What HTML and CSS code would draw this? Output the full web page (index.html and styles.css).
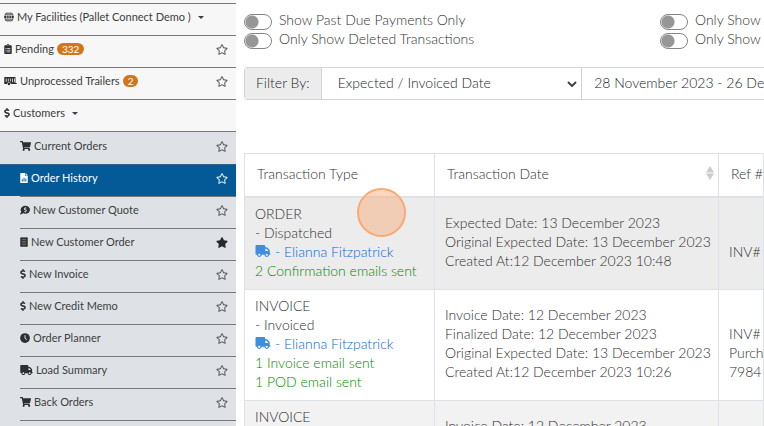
FILE: index.html
```html
<!DOCTYPE html>
<html lang="en">
<head>
<meta charset="utf-8">
<title>Order History</title>
<link rel="stylesheet" href="styles.css">
</head>
<body>
<svg class="sprite" aria-hidden="true">
  <symbol id="globe" viewBox="0 0 16 16"><circle cx="8" cy="8" r="7.8"/><g fill="none" stroke="#f7f7f7" stroke-width="1.1"><ellipse cx="8" cy="8" rx="3.7" ry="8"/><path d="M0 5.2h16M0 10.8h16M8 0v16"/></g></symbol>
  <symbol id="clipboard" viewBox="0 0 12 16"><path fill-rule="evenodd" d="M1.5 2H4a2 2 0 0 1 4 0h2.500a1.500 1.500 0 0 1 1.500 1.500v11a1.500 1.500 0 0 1-1.500 1.500h-9A1.500 1.500 0 0 1 0 14.500v-11A1.500 1.500 0 0 1 1.500 2zM6 1.300a.8.8 0 1 0 0 1.600.8.8 0 0 0 0-1.600zM2.200 6.500v1.300h1.300V6.500zm2.500 0v1h5v-1zM2.200 9.300v1.300h1.300V9.300zm2.500 0v1h5v-1zM2.200 12v1.300h1.300V12zm2.500 0v1h5v-1z"/></symbol>
  <symbol id="trailer" viewBox="0 0 20 16"><path fill-rule="evenodd" d="M1 1.500h16a1 1 0 0 1 1 1V11h2v1.800h-9.500a3 3 0 0 0-6 0H1a1 1 0 0 1-1-1V2.500a1 1 0 0 1 1-1zM2.500 4v5.500h1.200V4zm3.300 0v4.700H7V4zm3.300 0v4.700h1.200V4zm3.300 0v6h1.200V4zm3.200 0v6h1.200V4z"/><circle cx="7.500" cy="12.700" r="2"/></symbol>
  <symbol id="dollar" viewBox="0 0 288 512"><path d="M209.200 233.400l-108-31.600C88.700 198.200 80 186.500 80 173.500c0-16.300 13.200-29.500 29.500-29.500h66.300c12.200 0 24.200 3.700 34.200 10.500 6.100 4.100 14.300 3.100 19.500-2l34.800-34c7.100-6.900 6.100-18.400-1.800-24.500C238 74.800 207.400 64.100 176 64V16c0-8.800-7.200-16-16-16h-32c-8.800 0-16 7.200-16 16v48h-2.500C45.800 64-5.400 118.700.5 183.600c4.200 46.100 39.400 83.600 83.800 96.600l102.500 30c12.500 3.700 21.200 15.300 21.200 28.300 0 16.300-13.200 29.500-29.500 29.500h-66.300C100 368 88 364.300 78 357.500c-6.100-4.100-14.300-3.100-19.500 2l-34.800 34c-7.100 6.900-6.100 18.400 1.800 24.500 24.500 19.200 55.100 29.900 86.500 30v48c0 8.800 7.200 16 16 16h32c8.800 0 16-7.200 16-16v-48.200c46.600-.9 90.300-28.600 105.700-72.700 21.500-61.600-14.600-124.800-72.500-141.700z"/></symbol>
  <symbol id="cart" viewBox="0 0 576 512"><path d="M528.120 301.319l47.273-208C578.806 78.301 567.391 64 551.990 64H159.208l-9.166-44.810C147.758 8.021 137.930 0 126.529 0H24C10.745 0 0 10.745 0 24v16c0 13.255 10.745 24 24 24h69.883l70.248 343.435C147.325 417.100 136 435.222 136 456c0 30.928 25.072 56 56 56s56-25.072 56-56c0-15.674-6.447-29.835-16.824-40h209.647C430.447 426.165 424 440.326 424 456c0 30.928 25.072 56 56 56s56-25.072 56-56c0-22.172-12.888-41.332-31.579-50.405l5.517-24.276c3.413-15.018-8.002-29.319-23.403-29.319H218.117l-6.545-32h293.145c11.206 0 20.920-7.754 23.403-18.681z"/></symbol>
  <symbol id="file-chart" viewBox="0 0 12 16"><path fill-rule="evenodd" d="M1 0h6.500v4.500H12V15a1 1 0 0 1-1 1H1a1 1 0 0 1-1-1V1a1 1 0 0 1 1-1zM2.500 10v3.500H4V10zM5.300 7.500v6h1.500v-6zM8.200 9v4.500h1.500V9zM8.500 0 12 3.500H8.500z"/></symbol>
  <symbol id="quote" viewBox="0 0 16 16"><path fill-rule="evenodd" d="M8.500 1C12.600 1 16 3.900 16 7.500S12.600 14 8.500 14c-1.300 0-2.400-.2-3.500-.7C3.700 14.400 2 15 .4 15c-.5 0-.5-.5-.2-.8.9-1 1.500-2.100 1.700-3.300A6 6 0 0 1 1 7.500C1 3.900 4.400 1 8.500 1zM7.900 3.200v1C5.500 4.600 5.600 7.300 7.500 7.900l1.500.5c.9.300.5 1.200-.5 1.200-.7 0-1-.1-1.500-.5l-.8.9c.5.4 1 .7 1.700.8v1h1.200v-1c2.300-.4 2.300-3.100.4-3.700L8 6.600c-.8-.3-.4-1.200.5-1.200.5 0 .9.100 1.300.4l.8-.9c-.4-.4-.9-.6-1.500-.7v-1z"/></symbol>
  <symbol id="receipt" viewBox="0 0 12 16"><path d="M0 .5 1 1l1-1 1 1 1-1 1 1 1-1 1 1 1-1 1 1 1-1 1 1 1-.5v15l-1-.5-1 1-1-1-1 1-1-1-1 1-1-1-1 1-1-1-1 1-1-1-1 .5z"/><path fill="none" stroke="#8d9195" stroke-width=".9" d="M2.500 4h7M2.500 6.700h7M2.500 9.300h7M2.500 12h7"/></symbol>
  <symbol id="clock" viewBox="0 0 16 16"><circle cx="8" cy="8" r="7.800"/><path fill="none" stroke="#dee2e7" stroke-width="1.600" d="M8 3.500V8.500l3 2"/></symbol>
  <symbol id="truck" viewBox="0 0 640 512"><path fill-rule="evenodd" d="M48 0C21.500 0 0 21.500 0 48V368c0 26.500 21.500 48 48 48H64c0 53 43 96 96 96s96-43 96-96H384c0 53 43 96 96 96s96-43 96-96h32c17.700 0 32-14.300 32-32s-14.300-32-32-32V237.300c0-17-6.700-33.300-18.700-45.300L512 114.700c-12-12-28.300-18.700-45.300-18.700H416V48c0-26.500-21.500-48-48-48H48zM416 160h50.700L544 237.300V256H416V160zM112 416a48 48 0 1 1 96 0 48 48 0 1 1-96 0zm368-48a48 48 0 1 1 0 96 48 48 0 1 1 0-96z"/></symbol>
  <symbol id="star" viewBox="0 0 576 512"><path d="M528.100 171.500L382 150.200 316.700 17.800c-11.700-23.600-45.600-23.900-57.400 0L194 150.200 47.900 171.500c-26.200 3.800-36.700 36.100-17.700 54.600l105.700 103-25 145.500c-4.500 26.300 23.200 46 46.400 33.700L288 439.600l130.700 68.700c23.200 12.200 50.900-7.400 46.400-33.700l-25-145.500 105.700-103c19-18.500 8.500-50.800-17.700-54.600zM388.600 312.300l23.700 138.400L288 385.400l-124.300 65.300 23.700-138.400-100.600-98 139-20.200 62.200-126 62.200 126 139 20.200-100.600 98z"/></symbol>
  <symbol id="star-solid" viewBox="0 0 576 512"><path d="M528.100 171.500L382 150.200 316.700 17.800c-11.700-23.600-45.600-23.900-57.400 0L194 150.200 47.900 171.500c-26.200 3.800-36.700 36.100-17.700 54.600l105.700 103-25 145.500c-4.500 26.300 23.200 46 46.400 33.700L288 439.600l130.700 68.700c23.200 12.200 50.900-7.400 46.400-33.700l-25-145.500 105.700-103c19-18.500 8.500-50.800-17.700-54.600z"/></symbol>
</svg>

<div class="app">
  <nav class="sidebar">
    <ul class="menu">
      <li class="item"><a class="link" href="#"><svg class="icon square"><use href="#globe"/></svg>My Facilities (Pallet Connect Demo )<span class="caret"></span></a></li>
      <li class="item"><a class="link" href="#"><svg class="icon narrow"><use href="#clipboard"/></svg>Pending<span class="badge">332</span></a><button class="fav" aria-label="Favourite Pending"><svg><use href="#star"/></svg></button></li>
      <li class="item"><a class="link" href="#"><svg class="icon wide"><use href="#trailer"/></svg>Unprocessed Trailers<span class="badge">2</span></a><button class="fav" aria-label="Favourite Unprocessed Trailers"><svg><use href="#star"/></svg></button></li>
      <li class="item"><a class="link" href="#"><svg class="icon slim"><use href="#dollar"/></svg>Customers<span class="caret"></span></a></li>
    </ul>
    <ul class="menu submenu">
      <li class="item"><a class="link" href="#"><svg class="icon medium"><use href="#cart"/></svg>Current Orders</a><button class="fav" aria-label="Favourite Current Orders"><svg><use href="#star"/></svg></button></li>
      <li class="item active"><a class="link" href="#"><svg class="icon narrow"><use href="#file-chart"/></svg>Order History</a><button class="fav" aria-label="Favourite Order History"><svg><use href="#star"/></svg></button></li>
      <li class="item"><a class="link" href="#"><svg class="icon square"><use href="#quote"/></svg>New Customer Quote</a><button class="fav" aria-label="Favourite New Customer Quote"><svg><use href="#star"/></svg></button></li>
      <li class="item"><a class="link" href="#"><svg class="icon narrow"><use href="#receipt"/></svg>New Customer Order</a><button class="fav chosen" aria-label="Favourite New Customer Order"><svg><use href="#star-solid"/></svg></button></li>
      <li class="item"><a class="link" href="#"><svg class="icon slim"><use href="#dollar"/></svg>New Invoice</a><button class="fav" aria-label="Favourite New Invoice"><svg><use href="#star"/></svg></button></li>
      <li class="item"><a class="link" href="#"><svg class="icon slim"><use href="#dollar"/></svg>New Credit Memo</a><button class="fav" aria-label="Favourite New Credit Memo"><svg><use href="#star"/></svg></button></li>
      <li class="item"><a class="link" href="#"><svg class="icon square"><use href="#clock"/></svg>Order Planner</a><button class="fav" aria-label="Favourite Order Planner"><svg><use href="#star"/></svg></button></li>
      <li class="item"><a class="link" href="#"><svg class="icon wide"><use href="#truck"/></svg>Load Summary</a><button class="fav" aria-label="Favourite Load Summary"><svg><use href="#star"/></svg></button></li>
      <li class="item"><a class="link" href="#"><svg class="icon medium"><use href="#cart"/></svg>Back Orders</a><button class="fav" aria-label="Favourite Back Orders"><svg><use href="#star"/></svg></button></li>
      <li class="item"></li>
    </ul>
  </nav>

  <main class="content">
    <div class="switches">
      <label class="switch"><input type="checkbox">Show Past Due Payments Only</label>
      <label class="switch"><input type="checkbox">Only Show A</label>
      <label class="switch"><input type="checkbox">Only Show Deleted Transactions</label>
      <label class="switch"><input type="checkbox">Only Show C</label>
    </div>

    <div class="filter">
      <label class="filter-label" for="filter-by">Filter By:</label>
      <div class="filter-select">
        <select id="filter-by"><option>Expected / Invoiced Date</option></select>
        <svg class="chevron" viewBox="0 0 10 6"><path d="M1 1l4 4 4-4"/></svg>
      </div>
      <input class="filter-date" type="text" aria-label="Date range" value="28 November 2023 - 26 December 2023">
    </div>

    <table class="orders">
      <colgroup><col class="col-type"><col class="col-date"><col></colgroup>
      <thead>
        <tr>
          <th>Transaction Type</th>
          <th><div class="sortable">Transaction Date<svg class="sort" viewBox="0 0 8 14"><path d="M4 0l4 6.500H0zM4 14l4-6.500H0z"/></svg></div></th>
          <th>Ref #</th>
        </tr>
      </thead>
      <tbody>
        <tr class="hovered">
          <td>
            <div>ORDER</div>
            <div>- Dispatched</div>
            <a class="driver" href="#"><svg><use href="#truck"/></svg>- Elianna Fitzpatrick</a>
            <div class="sent">2 Confirmation emails sent</div>
          </td>
          <td>
            <div>Expected Date: 13 December 2023</div>
            <div>Original Expected Date: 13 December 2023</div>
            <div>Created At:12 December 2023 10:48</div>
          </td>
          <td>
            <br>
            <div>INV# I</div>
          </td>
        </tr>
        <tr>
          <td>
            <div>INVOICE</div>
            <div>- Invoiced</div>
            <a class="driver" href="#"><svg><use href="#truck"/></svg>- Elianna Fitzpatrick</a>
            <div class="sent">1 Invoice email sent</div>
            <div class="sent">1 POD email sent</div>
          </td>
          <td>
            <div>Invoice Date: 12 December 2023</div>
            <div>Finalized Date: 12 December 2023</div>
            <div>Original Expected Date: 13 December 2023</div>
            <div>Created At:12 December 2023 10:26</div>
          </td>
          <td>
            <br>
            <div>INV# I</div>
            <div>Purcha</div>
            <div>7984</div>
          </td>
        </tr>
        <tr class="striped">
          <td>
            <div>INVOICE</div>
          </td>
          <td class="offset">
            <div>Invoice Date: 12 December 2023</div>
          </td>
          <td></td>
        </tr>
      </tbody>
    </table>
    <span class="pointer"></span>
  </main>
</div>
</body>
</html>
```
FILE: styles.css
```css
* {
  box-sizing: border-box;
}

body {
  margin: 0;
  overflow: hidden;
  background: #fff;
  color: #303030;
  font: 300 14px/19px Lato, "Liberation Sans", sans-serif;
}

a {
  color: inherit;
  text-decoration: none;
}

.sprite {
  display: none;
}

.app {
  display: flex;
  height: 100vh;
  overflow: hidden;
}

/* Sidebar */

.sidebar {
  flex: 0 0 236px;
  padding-top: 3px;
  overflow: hidden;
  background: #f7f7f7;
  color: #3c3e40;
  font-size: 11px;
  font-weight: 400;
  line-height: 16px;
}

.menu {
  margin: 0;
  padding: 0;
  list-style: none;
}

.item {
  display: flex;
  align-items: center;
  justify-content: space-between;
  height: 32px;
  padding: 0 8px 5px 4px;
  border-top: 1px solid #77797b;
}

.link {
  display: flex;
  align-items: center;
  gap: 3px;
  white-space: nowrap;
}

.icon {
  height: 10px;
  fill: #2c2e30;
}

.slim { width: 6px; }
.narrow { width: 8px; }
.square { width: 10px; }
.medium { width: 11px; }
.wide { width: 13px; }

.caret {
  margin-left: 4px;
  border: 3px solid transparent;
  border-top-color: currentColor;
  border-bottom: 0;
}

.badge {
  padding: 0 5px;
  border-radius: 6px;
  background: #d3761a;
  color: #fff;
  font-size: 10px;
  line-height: 12px;
}

.fav {
  display: flex;
  padding: 0;
  border: 0;
  background: none;
  color: #5a5d60;
}

.chosen {
  color: #26282a;
}

.active .fav {
  color: #e6eef5;
}

.fav svg {
  width: 12px;
  height: 11px;
  fill: currentColor;
}

.submenu {
  border-top: 1px solid #77797b;
  background: #dee2e7;
}

.submenu .item {
  margin-left: 20px;
  padding-left: 0;
}

.submenu .item:first-child {
  border-top-color: transparent;
}

.submenu .active {
  margin-left: 0;
  padding-left: 20px;
  background: #045a97;
  border-top-color: #2f6187;
  color: #fff;
}

.active .icon {
  fill: #fff;
}

/* Content */

.content {
  position: relative;
  flex: 1;
  min-width: 0;
  padding: 10px 0 0 8px;
}

.switches {
  display: grid;
  grid-template-columns: minmax(0, 4fr) minmax(0, 1fr);
}

.switch {
  display: flex;
  align-items: center;
  gap: 7px;
  height: 19px;
  white-space: nowrap;
}

.switch input {
  flex: none;
  width: 28px;
  height: 16px;
  margin: 4px 0 0;
  appearance: none;
  border: 1px solid #858585;
  border-radius: 8px;
  background: radial-gradient(circle at 7px 7px, #979797 6px, transparent 7px);
}

.filter {
  display: flex;
  height: 33px;
  margin: 19px 0 53px;
  border: 1px solid #ced4da;
  border-right: 0;
  border-radius: 4px 0 0 4px;
  color: #212529;
}

.filter-label {
  padding: 5px 11px;
  border-right: 1px solid #ced4da;
  background: #ececec;
  white-space: nowrap;
}

.filter-select {
  position: relative;
  flex: 0 0 50%;
}

.filter select,
.filter-date {
  width: 100%;
  height: 100%;
  border: 0;
  background: none;
  color: inherit;
  font: inherit;
}

.filter select {
  padding: 0 16px 2px;
  appearance: none;
}

.filter .filter-date {
  flex: 1;
  min-width: 0;
  padding: 0 0 2px 12px;
  border-left: 1px solid #ced4da;
}

.chevron {
  position: absolute;
  top: 13px;
  right: 4px;
  width: 10px;
  height: 6px;
  fill: none;
  stroke: #40454a;
  stroke-width: 2;
}

.orders {
  width: 100%;
  table-layout: fixed;
  border-collapse: collapse;
  white-space: nowrap;
}

.col-type { width: 190px; }
.col-date { width: 284px; }

.orders th,
.orders td {
  border: 1px solid #dee2e6;
  text-align: left;
}

.orders th {
  height: 43px;
  padding: 0 4px 3px 12px;
  border-bottom-width: 2px;
  font-weight: inherit;
}

.orders td {
  padding: 6px 0 9px 10px;
}

.orders .striped td {
  vertical-align: top;
}

.orders .offset {
  padding-top: 15px;
}

.sortable {
  display: flex;
  align-items: center;
  justify-content: space-between;
}

.sort {
  width: 8px;
  height: 14px;
  fill: #ccc;
}

.hovered {
  background: #ececec;
}

.striped {
  background: #f2f2f2;
}

.driver {
  display: flex;
  align-items: center;
  gap: 4px;
  color: #0a68d0;
}

.driver svg {
  width: 16px;
  height: 12px;
  fill: #3b8ee2;
}

.sent {
  color: #008a00;
}

/* Click marker floating over the table */
.pointer {
  position: absolute;
  top: 188px;
  left: 121px;
  width: 49px;
  height: 49px;
  border: 2px solid #fba873;
  border-radius: 50%;
  background: rgba(251, 168, 115, .45);
}
```
